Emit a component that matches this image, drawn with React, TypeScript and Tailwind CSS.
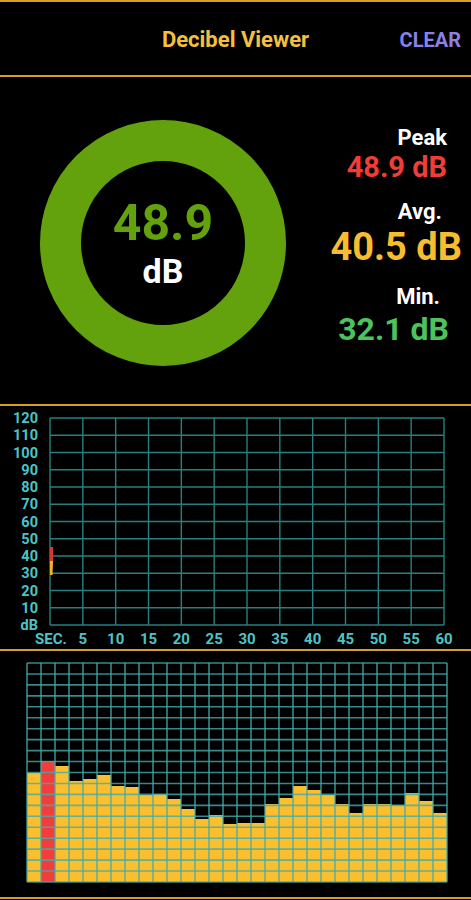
import React from 'react';

const TEAL = '#4ec3c6';

const bars = [109, 121, 116, 101, 103, 107, 96, 95, 87, 88, 83, 73, 63, 67, 58, 59, 59, 78, 84, 96, 92, 87, 78, 69, 78, 78, 77, 89, 81, 69];

const GoldLine = () => <div className="h-[2px] w-full bg-[#d49f27]" />;

const LineChart = () => {
    const left = 50;
    const right = 444;
    const top = 12;
    const bottom = 219;
    const colW = (right - left) / 12;
    const rowH = (bottom - top) / 12;
    const yLabels = ['120', '110', '100', '90', '80', '70', '60', '50', '40', '30', '20', '10', 'dB'];
    const xLabels = ['SEC.', '5', '10', '15', '20', '25', '30', '35', '40', '45', '50', '55', '60'];

    return (
        <svg width="471" height="243" className="block" style={{ fontFamily: 'Roboto, "Liberation Sans", sans-serif' }}>
            {yLabels.map((_, i) => (
                <line key={'h' + i} x1={left} x2={right} y1={top + i * rowH} y2={top + i * rowH} stroke="#27807f" strokeWidth="1.4" />
            ))}
            {xLabels.map((_, i) => (
                <line key={'v' + i} x1={left + i * colW} x2={left + i * colW} y1={top} y2={bottom} stroke="#27807f" strokeWidth="1.4" />
            ))}
            {yLabels.map((t, i) => (
                <text key={'yl' + i} x={38} y={top + i * rowH + 5} textAnchor="end" fontSize="14.5" fontWeight="700" fill={TEAL}>
                    {t}
                </text>
            ))}
            {xLabels.map((t, i) => (
                <text key={'xl' + i} x={left + i * colW + (i === 0 ? 1 : 0)} y={238} textAnchor="middle" fontSize="15" fontWeight="700" fill={TEAL}>
                    {t}
                </text>
            ))}
            <rect x={50} y={141} width={3} height={15} fill="#d23b33" />
            <polygon points="50,155 53,155 52.5,169 50,169" fill="#f2b52a" />
        </svg>
    );
};

const BarChart = () => {
    const left = 27;
    const right = 447;
    const top = 12;
    const bottom = 231;
    const cols = 30;
    const rows = 20;
    const colW = (right - left) / cols;
    const rowH = (bottom - top) / rows;

    return (
        <svg width="471" height="246" className="block">
            {bars.map((h, i) => (
                <rect key={'b' + i} x={left + i * colW} y={bottom - h} width={colW} height={h} fill={i === 1 ? '#f33d3b' : '#fbbe2c'} />
            ))}
            {Array.from({ length: rows + 1 }).map((_, i) => (
                <line key={'h' + i} x1={left} x2={right} y1={top + i * rowH} y2={top + i * rowH} stroke="#42abab" strokeOpacity="0.8" strokeWidth="1.6" />
            ))}
            {Array.from({ length: cols + 1 }).map((_, i) => (
                <line key={'v' + i} x1={left + i * colW} x2={left + i * colW} y1={top} y2={bottom} stroke="#42abab" strokeOpacity="0.8" strokeWidth="1.6" />
            ))}
        </svg>
    );
};

export default function App() {
    return (
        <div className="w-[471px] h-[900px] bg-black overflow-hidden font-['Roboto','Liberation_Sans',sans-serif] font-bold">
            <GoldLine />
            <header className="h-[73px] flex items-center">
                <div className="w-[90px]" />
                <h1 className="flex-1 text-center text-[22px] leading-none text-[#f4c13e] pt-[3px]">Decibel Viewer</h1>
                <button className="w-[90px] text-right pr-[10px] text-[20px] leading-none text-[#8b80e6] pt-[3px]">CLEAR</button>
            </header>
            <GoldLine />

            <section className="h-[327px] flex">
                <div className="pl-[40px] pt-[43px]">
                    <div className="w-[246px] h-[246px] rounded-full border-[41px] border-[#63a10d] flex flex-col items-center justify-center">
                        <div className="text-[50px] leading-[56px] text-[#63a10d]">48.9</div>
                        <div className="text-[34px] leading-[40px] text-white">dB</div>
                    </div>
                </div>
                <div className="flex-1 flex flex-col items-end pr-[9px] pt-[49px]">
                    <div className="text-[22px] leading-[24px] text-white pr-[15px]">Peak</div>
                    <div className="text-[29px] leading-[30px] text-[#f23c36] pr-[15px] mt-[2px]">48.9 dB</div>
                    <div className="text-[22px] leading-[24px] text-white pr-[20px] mt-[18px]">Avg.</div>
                    <div className="text-[38px] leading-[38px] text-[#f7bd2f] mt-[4px]">40.5 dB</div>
                    <div className="text-[22px] leading-[24px] text-white pr-[22px] mt-[19px]">Min.</div>
                    <div className="text-[32px] leading-[32px] text-[#4cc45a] pr-[13px] mt-[4px]">32.1 dB</div>
                </div>
            </section>
            <GoldLine />

            <section className="h-[243px]">
                <LineChart />
            </section>
            <GoldLine />

            <section className="h-[246px]">
                <BarChart />
            </section>
            <GoldLine />
        </div>
    );
}
